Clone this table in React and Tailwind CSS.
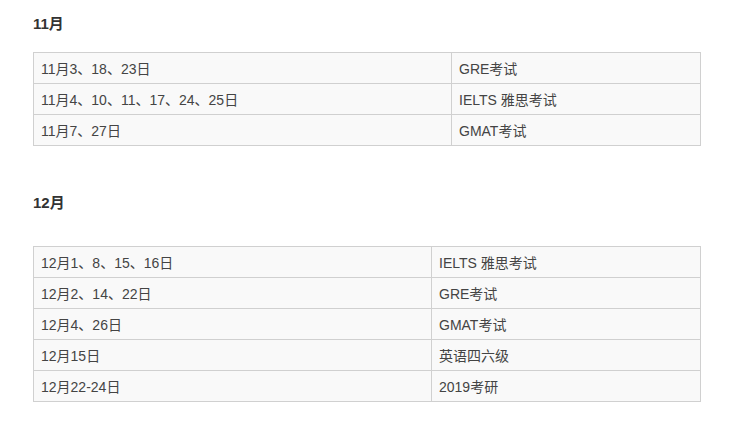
const schedule = [
  {
    month: '11月',
    split: 'w-[418px]',
    gap: 'mt-[17px]',
    rows: [
      ['11月3、18、23日', 'GRE考试'],
      ['11月4、10、11、17、24、25日', 'IELTS 雅思考试'],
      ['11月7、27日', 'GMAT考试'],
    ],
  },
  {
    month: '12月',
    split: 'w-[398px]',
    gap: 'mt-[32px]',
    rows: [
      ['12月1、8、15、16日', 'IELTS 雅思考试'],
      ['12月2、14、22日', 'GRE考试'],
      ['12月4、26日', 'GMAT考试'],
      ['12月15日', '英语四六级'],
      ['12月22-24日', '2019考研'],
    ],
  },
]

function MonthBlock({ month, split, gap, rows, first }) {
  return (
    <section className={first ? 'pt-[13px]' : 'mt-[46px]'}>
      <h3 className="text-[15px] leading-[22px] font-bold text-[#333]">{month}</h3>
      <table className={`${gap} w-[668px] border-collapse text-[14px] leading-[20px] text-[#444]`}>
        <tbody>
          {rows.map(([date, exam]) => (
            <tr key={date} className="bg-[#f9f9f9]">
              <td className={`${split} border border-[#d0d0d0] pl-[7px] pt-[6px] pb-[4px] font-normal`}>{date}</td>
              <td className="border border-[#d0d0d0] pl-[7px] pt-[6px] pb-[4px]">{exam}</td>
            </tr>
          ))}
        </tbody>
      </table>
    </section>
  )
}

export default function App() {
  return (
    <div className="w-[746px] h-[431px] bg-white pl-[33px] font-['Liberation_Sans','Noto_Sans_CJK_SC',sans-serif]">
      {schedule.map((m, i) => (
        <MonthBlock key={m.month} {...m} first={i === 0} />
      ))}
    </div>
  )
}
